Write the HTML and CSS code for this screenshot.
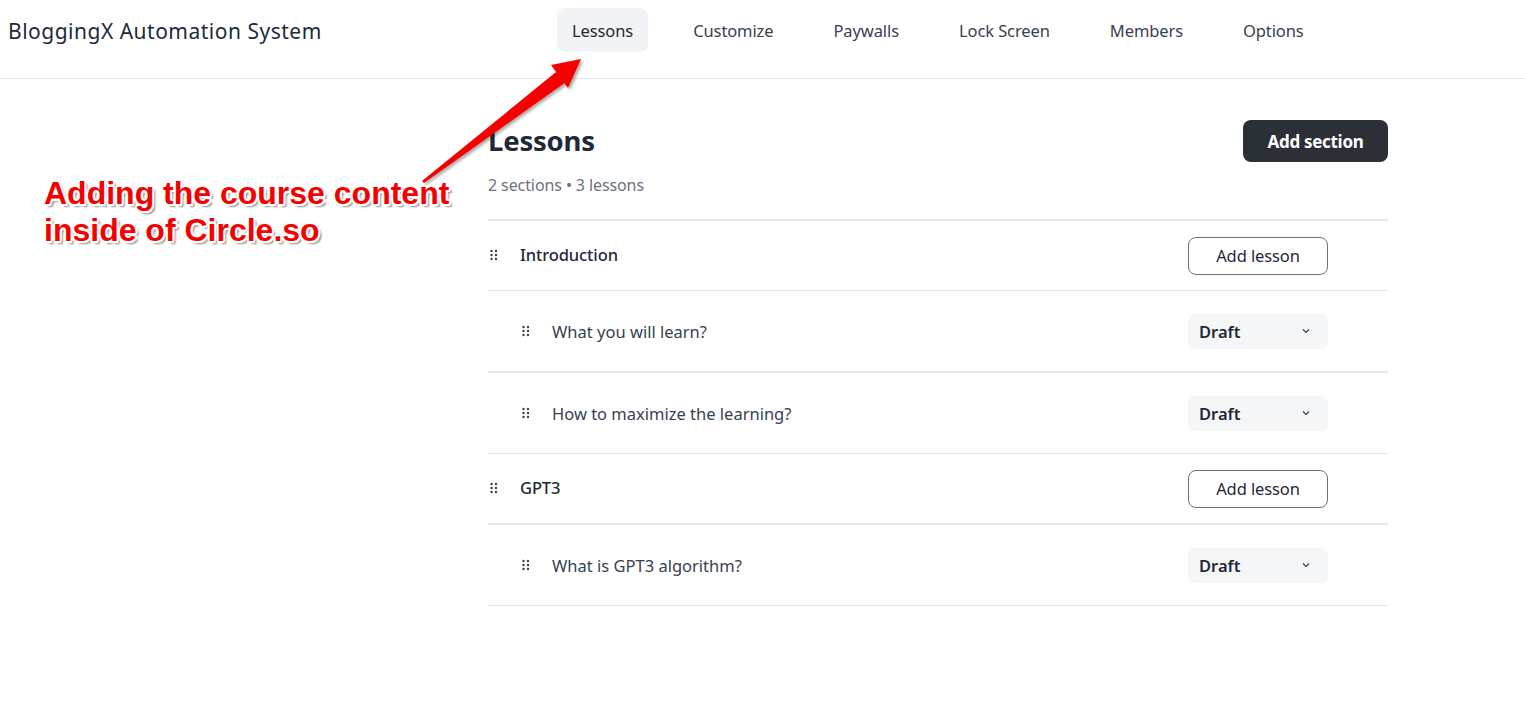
FILE: index.html
```html
<!DOCTYPE html>
<html>
<head>
<meta charset="utf-8">
<link rel="stylesheet" href="styles.css">
</head>
<body>
<header class="topbar">
  <div class="brand">BloggingX Automation System</div>
  <nav class="nav">
    <a class="nav-item active">Lessons</a>
    <a class="nav-item">Customize</a>
    <a class="nav-item">Paywalls</a>
    <a class="nav-item">Lock Screen</a>
    <a class="nav-item">Members</a>
    <a class="nav-item">Options</a>
  </nav>
</header>
<main class="content">
  <div class="page-head">
    <div>
      <h1 class="title">Lessons</h1>
      <div class="subtitle">2 sections • 3 lessons</div>
    </div>
    <button class="btn-dark">Add section</button>
  </div>
  <div class="list">
    <div class="row section">
      <div class="row-left"><svg class="handle" width="8" height="12" viewBox="0 0 8 12"><g fill="#374151"><circle cx="1.5" cy="2" r="1.2"/><circle cx="6" cy="2" r="1.2"/><circle cx="1.5" cy="6" r="1.2"/><circle cx="6" cy="6" r="1.2"/><circle cx="1.5" cy="10" r="1.2"/><circle cx="6" cy="10" r="1.2"/></g></svg><span class="section-name">Introduction</span></div>
      <button class="btn-outline">Add lesson</button>
    </div>
    <div class="row lesson thick">
      <div class="row-left"><svg class="handle" width="8" height="12" viewBox="0 0 8 12"><g fill="#374151"><circle cx="1.5" cy="2" r="1.2"/><circle cx="6" cy="2" r="1.2"/><circle cx="1.5" cy="6" r="1.2"/><circle cx="6" cy="6" r="1.2"/><circle cx="1.5" cy="10" r="1.2"/><circle cx="6" cy="10" r="1.2"/></g></svg><span class="lesson-name">What you will learn?</span></div>
      <div class="select"><span>Draft</span><svg width="12" height="12" viewBox="0 0 12 12"><path d="M3 4.5l3 3 3-3" fill="none" stroke="#374151" stroke-width="1.2"/></svg></div>
    </div>
    <div class="row lesson">
      <div class="row-left"><svg class="handle" width="8" height="12" viewBox="0 0 8 12"><g fill="#374151"><circle cx="1.5" cy="2" r="1.2"/><circle cx="6" cy="2" r="1.2"/><circle cx="1.5" cy="6" r="1.2"/><circle cx="6" cy="6" r="1.2"/><circle cx="1.5" cy="10" r="1.2"/><circle cx="6" cy="10" r="1.2"/></g></svg><span class="lesson-name">How to maximize the learning?</span></div>
      <div class="select"><span>Draft</span><svg width="12" height="12" viewBox="0 0 12 12"><path d="M3 4.5l3 3 3-3" fill="none" stroke="#374151" stroke-width="1.2"/></svg></div>
    </div>
    <div class="row section thick">
      <div class="row-left"><svg class="handle" width="8" height="12" viewBox="0 0 8 12"><g fill="#374151"><circle cx="1.5" cy="2" r="1.2"/><circle cx="6" cy="2" r="1.2"/><circle cx="1.5" cy="6" r="1.2"/><circle cx="6" cy="6" r="1.2"/><circle cx="1.5" cy="10" r="1.2"/><circle cx="6" cy="10" r="1.2"/></g></svg><span class="section-name">GPT3</span></div>
      <button class="btn-outline">Add lesson</button>
    </div>
    <div class="row lesson">
      <div class="row-left"><svg class="handle" width="8" height="12" viewBox="0 0 8 12"><g fill="#374151"><circle cx="1.5" cy="2" r="1.2"/><circle cx="6" cy="2" r="1.2"/><circle cx="1.5" cy="6" r="1.2"/><circle cx="6" cy="6" r="1.2"/><circle cx="1.5" cy="10" r="1.2"/><circle cx="6" cy="10" r="1.2"/></g></svg><span class="lesson-name">What is GPT3 algorithm?</span></div>
      <div class="select"><span>Draft</span><svg width="12" height="12" viewBox="0 0 12 12"><path d="M3 4.5l3 3 3-3" fill="none" stroke="#374151" stroke-width="1.2"/></svg></div>
    </div>
  </div>
</main>
<div class="annotation">Adding the course content<br>inside of Circle.so</div>
<svg class="arrow" width="1525" height="714" viewBox="0 0 1525 714">
  <defs>
    <filter id="sh" x="-20%" y="-20%" width="140%" height="140%">
      <feDropShadow dx="2" dy="2" stdDeviation="1.5" flood-color="#000" flood-opacity="0.35"/>
    </filter>
  </defs>
  <g filter="url(#sh)">
    <polygon points="422,181 424,183 566,82 556,72" fill="#f40000"/>
    <polygon points="581,59 551,65 568,88" fill="#f40000"/>
  </g>
</svg>
</body>
</html>
```

FILE: styles.css
```css
html, body {
  margin: 0;
  padding: 0;
  background: #fff;
}
body {
  font-family: "Noto Sans", "Open Sans", sans-serif;
  color: #1f2937;
  width: 1525px;
  height: 714px;
  overflow: hidden;
  position: relative;
}
.topbar {
  height: 78px;
  border-bottom: 1px solid #e5e7eb;
  display: flex;
  align-items: flex-start;
}
.brand {
  font-size: 21px;
  color: #1f2a3a;
  padding: 17px 0 0 8px;
  width: 549px;
  letter-spacing: 0.5px;
}
.nav {
  display: flex;
  padding-top: 8px;
}
.nav-item {
  font-size: 16.5px;
  color: #374151;
  height: 44px;
  line-height: 46px;
  padding: 0 15px;
  border-radius: 8px;
  margin-right: 30px;
  letter-spacing: -0.1px;
}
.nav-item.active {
  background: #f1f3f6;
  color: #1f2937;
}
.content {
  width: 900px;
  margin: 0 0 0 488px;
  padding-top: 41px;
}
.page-head {
  display: flex;
  justify-content: space-between;
  align-items: flex-start;
  padding-bottom: 23px;
  border-bottom: 2px solid #e5e7eb;
}
.title {
  margin: 3px 0 0;
  font-size: 27.5px;
  font-weight: 700;
  line-height: 36px;
  color: #1f2937;
  letter-spacing: -0.2px;
}
.subtitle {
  margin-top: 15px;
  font-size: 16px;
  color: #6b7280;
  line-height: 22px;
  letter-spacing: -0.1px;
}
.btn-dark {
  background: #2b2f36;
  color: #fff;
  border: none;
  border-radius: 8px;
  height: 42px;
  width: 145px;
  font-family: inherit;
  font-size: 17px;
  font-weight: 700;
  letter-spacing: -0.3px;
}
.row {
  display: flex;
  align-items: center;
  justify-content: space-between;
  border-bottom: 1px solid #e5e7eb;
  padding-right: 60px;
}
.row.thick { border-bottom-width: 2px; }
.row.section { height: 69px; }
.row.lesson { height: 80px; }
.row-left {
  display: flex;
  align-items: center;
}
.handle {
  display: block;
  margin-right: 22px;
}
.section .row-left { padding-left: 2px; margin-top: -2px; }
.lesson .row-left { padding-left: 34px; }
.section-name {
  font-size: 16.5px;
  font-weight: 500;
  color: #1f2937;
  letter-spacing: -0.1px;
}
.lesson-name {
  font-size: 16.5px;
  color: #374151;
}
.btn-outline {
  width: 140px;
  height: 38px;
  border: 1px solid #6b7280;
  background: #fff;
  border-radius: 8px;
  font-family: inherit;
  font-size: 16.5px;
  color: #1f2937;
  letter-spacing: -0.1px;
}
.select {
  width: 140px;
  height: 35px;
  box-sizing: border-box;
  background: #f5f6f8;
  border-radius: 7px;
  display: flex;
  align-items: center;
  justify-content: space-between;
  padding: 0 16px 0 11px;
  font-size: 16.5px;
  font-weight: 600;
  color: #1f2937;
}
.annotation {
  position: absolute;
  left: 44px;
  top: 175px;
  font-family: "Liberation Sans", Arial, sans-serif;
  font-weight: 700;
  font-size: 32px;
  line-height: 37px;
  color: #f40000;
  text-shadow:
    -1.5px -1.5px 0 #fff, 1.5px -1.5px 0 #fff, -1.5px 1.5px 0 #fff, 1.5px 1.5px 0 #fff,
    0 -2px 0 #fff, 0 2px 0 #fff, -2px 0 0 #fff, 2px 0 0 #fff,
    3px 3px 2px rgba(0,0,0,0.45);
}
.arrow {
  position: absolute;
  left: 0;
  top: 0;
  pointer-events: none;
}
```
